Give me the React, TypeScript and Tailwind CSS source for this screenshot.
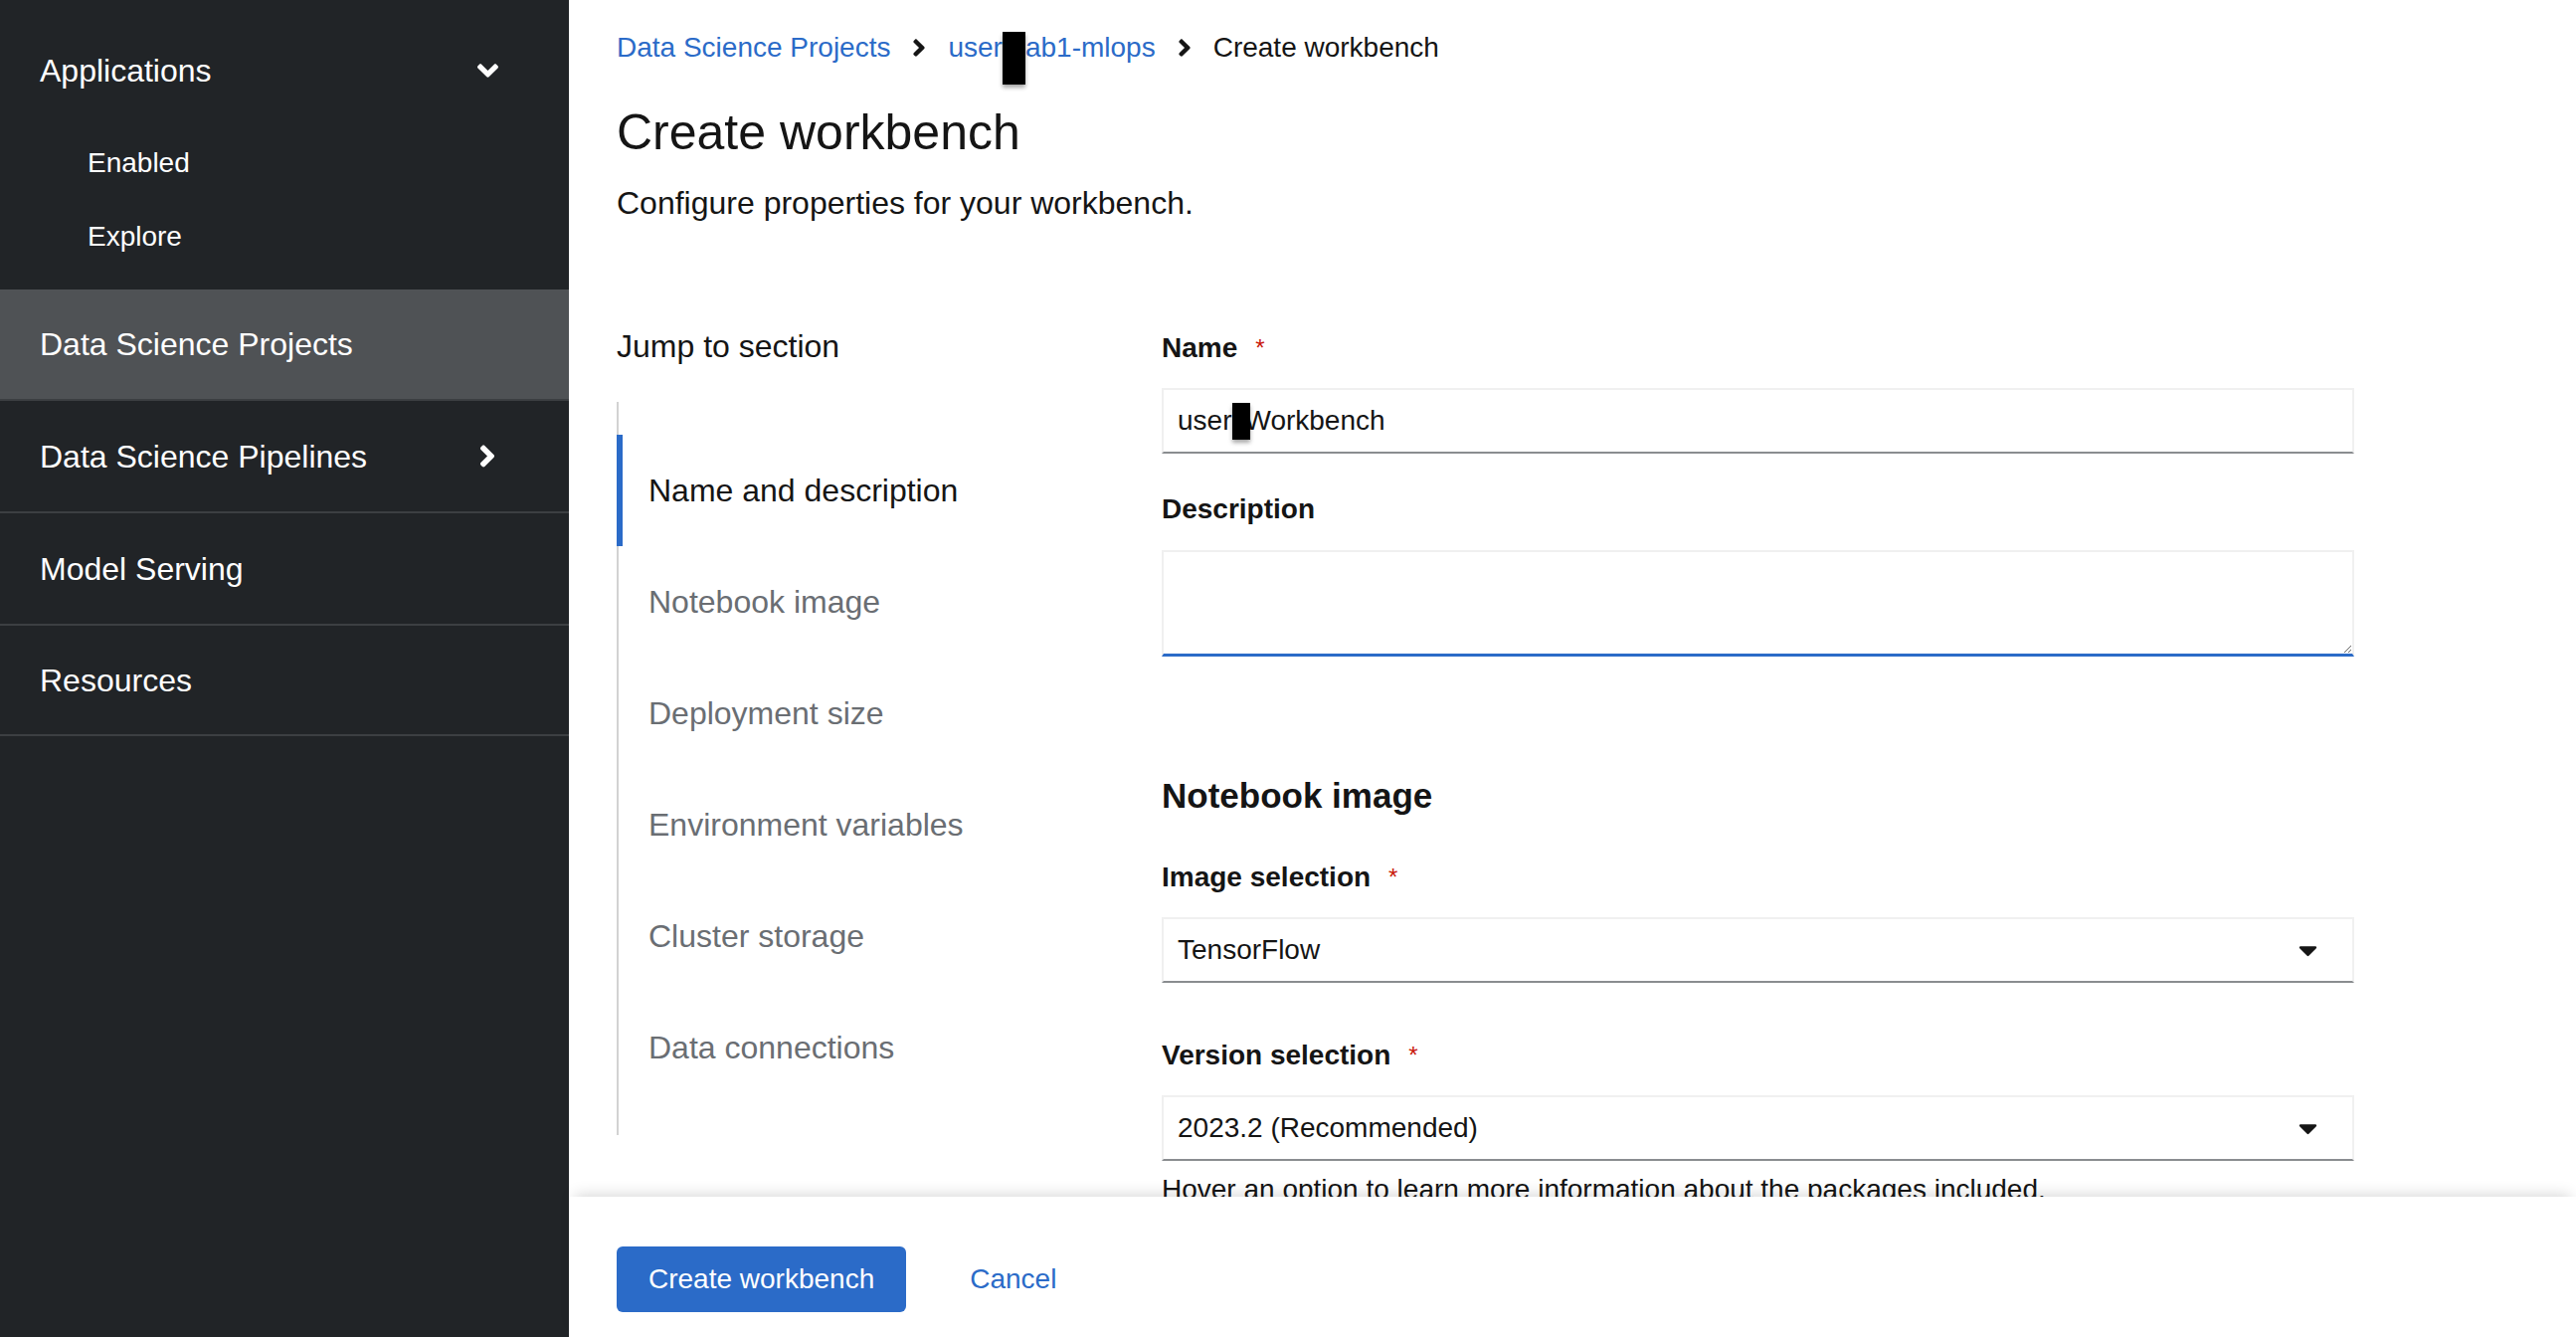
import React from 'react';

const navItems = ['Data Science Pipelines', 'Model Serving', 'Resources'];

const jumpItems = [
  'Name and description',
  'Notebook image',
  'Deployment size',
  'Environment variables',
  'Cluster storage',
  'Data connections',
];

function AngleDown({ className }: { className?: string }) {
  return (
    <svg className={className} viewBox="0 0 320 512" fill="currentColor">
      <path d="M143 352.3L7 216.3c-9.4-9.4-9.4-24.6 0-33.9l22.6-22.6c9.4-9.4 24.6-9.4 33.9 0l96.4 96.4 96.4-96.4c9.4-9.4 24.6-9.4 33.9 0l22.6 22.6c9.4 9.4 9.4 24.6 0 33.9l-136 136c-9.2 9.4-24.4 9.4-33.8 0z" />
    </svg>
  );
}

function AngleRight({ className }: { className?: string }) {
  return (
    <svg className={className} viewBox="0 0 256 512" fill="currentColor">
      <path d="M224.3 273l-136 136c-9.4 9.4-24.6 9.4-33.9 0l-22.6-22.6c-9.4-9.4-9.4-24.6 0-33.9l96.4-96.4-96.4-96.4c-9.4-9.4-9.4-24.6 0-33.9L54.3 103c9.4-9.4 24.6-9.4 33.9 0l136 136c9.5 9.4 9.5 24.6.1 34z" />
    </svg>
  );
}

function CaretDown() {
  return (
    <svg className="h-[30px] w-[19px] text-[#151515]" viewBox="0 0 320 512" fill="currentColor">
      <path d="M31.3 192h257.3c17.8 0 26.7 21.5 14.1 34.1L174.1 354.8c-7.8 7.8-20.5 7.8-28.3 0L17.2 226.1C4.6 213.5 13.5 192 31.3 192z" />
    </svg>
  );
}

function Label({ text, required }: { text: string; required?: boolean }) {
  return (
    <div className="flex h-[42px] items-center text-[28px] font-bold">
      {text}
      {required && <span className="ml-[18px] text-[24px] font-normal text-[#c9190b]">*</span>}
    </div>
  );
}

function Select({ value }: { value: string }) {
  return (
    <div className="mt-[19px] flex h-[66px] items-center justify-between border-2 border-[#f0f0f0] border-b-[#8a8d90] pl-[14px] pr-[35px] text-[28px]">
      <span>{value}</span>
      <CaretDown />
    </div>
  );
}

function Sidebar() {
  return (
    <aside className="w-[572px] shrink-0 bg-[#212427] text-white">
      <div className="pt-[48px] pb-[16px]">
        <div className="flex h-[46px] items-center justify-between pl-[40px] pr-[71px] text-[32px]">
          Applications
          <AngleDown className="h-[34px] w-[21px]" />
        </div>
        <div className="mt-[33px] text-[28px]">
          <div className="flex h-[74px] items-center pl-[88px]">Enabled</div>
          <div className="flex h-[74px] items-center pl-[88px]">Explore</div>
        </div>
      </div>

      <div className="flex h-[110px] items-center bg-[#4f5255] pl-[40px] text-[32px]">Data Science Projects</div>

      {navItems.map((item, i) => (
        <div
          key={item}
          className={`flex h-[113px] items-center justify-between border-t-2 border-[#3c3f42] pl-[40px] pr-[73px] text-[32px] ${
            i === navItems.length - 1 ? 'border-b-2' : ''
          }`}
        >
          {item}
          {i === 0 && <AngleRight className="h-[35px] w-[18px]" />}
        </div>
      ))}
    </aside>
  );
}

export default function App() {
  return (
    <div className="flex h-[1344px] w-full overflow-hidden bg-white font-['Liberation_Sans',Arial,sans-serif] text-[#151515]">
      <Sidebar />

      <main className="flex min-w-0 flex-1 flex-col">
        <div className="flex-1 overflow-hidden pl-[48px]">
          {/* Breadcrumb */}
          <nav className="mt-[27px] flex h-[42px] items-center text-[28px]">
            <span className="text-[#2b6bc8]">Data Science Projects</span>
            <AngleRight className="mx-[22px] h-[28px] w-[14px] text-[#151515]" />
            <span className="text-[#2b6bc8]">user</span>
            <span className="relative z-10 h-[53px] w-[23px] translate-y-[10px] bg-black shadow-[0_3px_4px_rgba(0,0,0,0.35)]" />
            <span className="text-[#2b6bc8]">ab1-mlops</span>
            <AngleRight className="mx-[22px] h-[28px] w-[14px] text-[#151515]" />
            <span>Create workbench</span>
          </nav>

          <h1 className="mt-[33px] text-[50px] leading-[62px]">Create workbench</h1>
          <p className="mt-[16px] text-[32px] leading-[48px]">Configure properties for your workbench.</p>

          <div className="mt-[96px] flex">
            {/* Jump links */}
            <div className="w-[548px] shrink-0">
              <div className="text-[32px] leading-[48px]">Jump to section</div>
              <div className="mt-[32px] border-l-2 border-[#d2d2d2] pt-[33px] pb-[32px]">
                {jumpItems.map((item, i) =>
                  i === 0 ? (
                    <div
                      key={item}
                      className="-ml-[2px] flex h-[112px] items-center border-l-[6px] border-[#2b6bc8] pl-[26px] text-[32px]"
                    >
                      {item}
                    </div>
                  ) : (
                    <div key={item} className="flex h-[112px] items-center pl-[30px] text-[32px] text-[#6a6e73]">
                      {item}
                    </div>
                  )
                )}
              </div>
            </div>

            {/* Form */}
            <div className="w-[1199px] shrink-0 pt-[5px]">
              <Label text="Name" required />
              <div className="mt-[19px] flex h-[66px] items-center border-2 border-[#f0f0f0] border-b-[#8a8d90] pl-[14px] text-[28px]">
                user
                <span className="relative z-10 -mr-[6px] ml-[1px] h-[37px] w-[18px] bg-black shadow-[0_3px_4px_rgba(0,0,0,0.35)]" />
                Workbench
              </div>

              <div className="mt-[35px]">
                <Label text="Description" />
              </div>
              <textarea
                className="mt-[20px] block h-[107px] w-full resize-y border-2 border-[#f0f0f0] border-b-[3px] border-b-[#2b6bc8] px-[14px] text-[28px] outline-none"
                defaultValue=""
              />

              <h2 className="mt-[116px] text-[35px] font-bold leading-[48px]">Notebook image</h2>

              <div className="mt-[37px]">
                <Label text="Image selection" required />
              </div>
              <Select value="TensorFlow" />

              <div className="mt-[52px]">
                <Label text="Version selection" required />
              </div>
              <Select value="2023.2 (Recommended)" />

              <p className="mt-[9px] text-[28px] leading-[40px]">
                Hover an option to learn more information about the packages included.
              </p>
            </div>
          </div>
        </div>

        {/* Sticky footer */}
        <footer className="relative z-20 flex h-[141px] shrink-0 items-start bg-white pl-[48px] pt-[50px] shadow-[0_-8px_14px_-6px_rgba(0,0,0,0.16)]">
          <button className="flex h-[66px] items-center rounded-[6px] bg-[#2b6bc8] px-[32px] text-[28px] text-white">
            Create workbench
          </button>
          <span className="ml-[64px] flex h-[66px] items-center text-[28px] text-[#2b6bc8]">Cancel</span>
        </footer>
      </main>
    </div>
  );
}
